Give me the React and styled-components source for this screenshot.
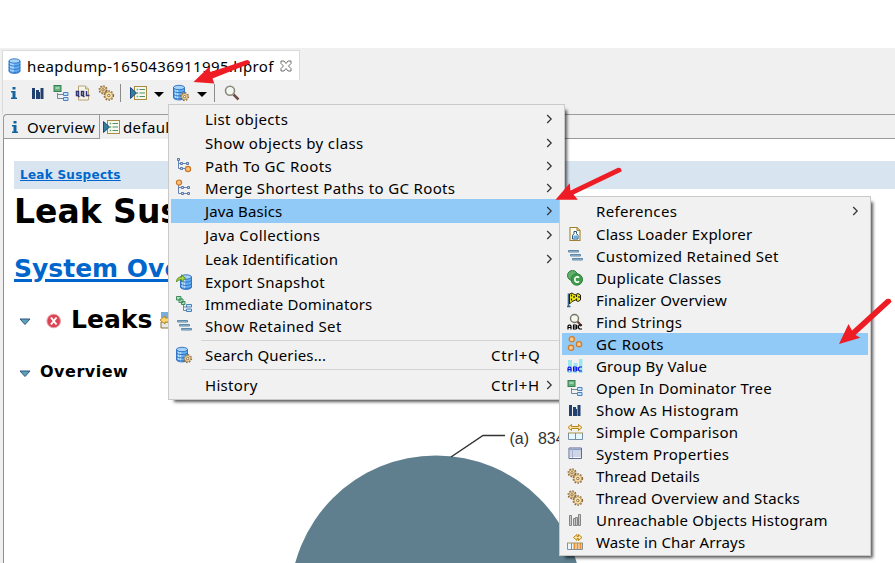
import React from "react";
import styled, { createGlobalStyle, css } from "styled-components";

const Global = createGlobalStyle`
  * { box-sizing: border-box; }
  html, body { margin: 0; padding: 0; background: #fff; overflow: hidden; }
`;

const uiFont = css`
  font-family: "Noto Sans", "Open Sans", sans-serif;
  font-size: 15px;
  color: #000;
  white-space: pre;
`;

/* ---------- page parts ---------- */

const Page = styled.div`
  ${uiFont}
  position: relative;
  width: 895px;
  height: 563px;
  padding-top: 48px;
  background: #fff;
  overflow: hidden;
`;
const Workbench = styled.div`
  height: 515px;
  padding: 2px 0 0 2px;
  background: #f0f0f0;
  display: flex;
  flex-direction: column;
`;
const EditorTab = styled.div`
  display: flex;
  align-items: center;
  width: 298px;
  height: 30px;
  padding: 1px 0 0 5px;
  background: #fff;
  border: solid #dadada;
  border-width: 1px 1px 0 1px;
`;
const FileName = styled.span`
  margin: 0 7px 0 5px;
  width: 246px;
  line-height: 22px;
  letter-spacing: 0.38px;
`;
const Toolbar = styled.div`
  display: flex;
  align-items: center;
  height: 34px;
  padding: 0 0 8px 3px;
  border-left: 1px solid #dadada;
`;
const Tool = styled.span`
  display: flex;
  margin-right: ${(p) => p.$gap}px;
`;
const ToolDivider = styled.span`
  width: 1px;
  height: 18px;
  margin-right: ${(p) => p.$gap}px;
  background: #8c8c8c;
`;
const Caret = styled.span`
  width: 0;
  height: 0;
  margin: 2px ${(p) => p.$gap}px 0 0;
  border: solid transparent;
  border-width: 5px 5px 0;
  border-top-color: #000;
`;
const PageTabs = styled.div`
  display: flex;
  flex: none;
  height: 25px;
  margin-left: 1px;
  border: solid #9a9a9a;
  border-width: 1px 0 0 1px;
  border-top-left-radius: 4px;
`;
const PageTab = styled.div`
  display: flex;
  align-items: center;
  width: ${(p) => p.$w}px;
  padding-left: ${(p) => p.$pl}px;
  gap: ${(p) => p.$gap}px;
  letter-spacing: 0.35px;
  border-right: 1px solid #9a9a9a;
  border-bottom: ${(p) => (p.$active ? "0" : "1px solid #9a9a9a")};
`;
const TabsRest = styled.div`
  flex: 1;
  border-bottom: 1px solid #9a9a9a;
`;
const Report = styled.div`
  flex: 1;
  display: flex;
  flex-direction: column;
  margin-left: 1px;
  padding-top: 22px;
  background: #fff;
  border-left: 1px solid #8f8f8f;
  font-family: "DejaVu Sans", Verdana, sans-serif;
  font-weight: bold;
`;
const Breadcrumb = styled.div`
  flex: none;
  height: 28px;
  margin-left: 10px;
  padding-left: 6px;
  background: #d8e5f0;
  color: #0066cc;
  font-size: 12px;
  line-height: 29px;
  text-decoration: underline;
  letter-spacing: 0.28px;
`;
const Title = styled.div`
  margin: 3px 0 0 10px;
  font-size: 33px;
  line-height: 40px;
`;
const SystemLink = styled.div`
  margin: 22px 0 0 10px;
  color: #0066cc;
  font-size: 25px;
  line-height: 30px;
  text-decoration: underline;
  text-decoration-thickness: 3px;
  text-underline-offset: 2px;
`;
const Section = styled.div`
  display: flex;
  align-items: center;
  margin: ${(p) => p.$top}px 0 0 15px;
  font-size: ${(p) => p.$size}px;
  line-height: ${(p) => p.$lh}px;
  letter-spacing: ${(p) => p.$ls || "0"};
`;
const Twistie = styled.span`
  display: flex;
  margin: 3px ${(p) => p.$gap}px 0 0;
`;
const SectionIcon = styled.span`
  display: flex;
  margin: 1px ${(p) => p.$gap}px 0 0;
`;
const Chart = styled.svg`
  flex: none;
  display: block;
  font-family: "Liberation Sans", Arial, sans-serif;
  font-size: 16px;
  font-weight: normal;
`;

/* ---------- menus ---------- */

const Menu = styled.div`
  position: absolute;
  left: ${(p) => p.$x}px;
  top: ${(p) => p.$y}px;
  width: ${(p) => p.$w}px;
  padding: 2px;
  background: #f1f1f1;
  border: 1px solid #c9c9c9;
  box-shadow: 4px 4px 3px -2px rgba(0, 0, 0, 0.65);
`;
const MenuRow = styled.div`
  display: flex;
  align-items: center;
  height: ${(p) => (p.$tall ? 24 : 22)}px;
  background: ${(p) => (p.$hot ? "#91c9f7" : "transparent")};
`;
const IconCell = styled.span`
  display: flex;
  flex: none;
  width: 34px;
  padding-left: 5px;
`;
const Label = styled.span`
  flex: 1;
  line-height: 22px;
  letter-spacing: ${(p) => p.$ls}px;
`;
const Shortcut = styled.span`
  width: 50px;
  margin-right: 5px;
  line-height: 22px;
  letter-spacing: 0.7px;
`;
const ChevronCell = styled.span`
  display: flex;
  width: 16px;
  padding-bottom: 1px;
`;
const Divider = styled.div`
  height: 1px;
  margin: 3px 0 3px 30px;
  background: #d3d3d3;
`;
const Arrows = styled.svg`
  position: absolute;
  left: 0;
  top: 0;
  pointer-events: none;
`;

/* ---------- icons ---------- */

const Svg = styled.svg`
  display: block;
  flex: none;
  overflow: visible;
`;
const Ico = ({ children, w = 16, h = 16 }) => (
  <Svg width={w} height={h} viewBox={`0 0 ${w} ${h}`}>{children}</Svg>
);

const Cylinder = ({ x = 0, y = 0 }) => (
  <g transform={`translate(${x} ${y})`} stroke="#2a6cc0" strokeWidth="0.900">
    <path d="M1 3v10c0 3.200 11 3.200 11 0V3z" fill="#62aef2" />
    <path d="M3 5v9M5 5v10" stroke="#b9e0ff" strokeWidth="1.500" />
    <path d="M1 6c0 2.800 11 2.800 11 0M1 9.300c0 2.800 11 2.800 11 0M1 12.300c0 2.800 11 2.800 11 0" fill="none" />
    <ellipse cx="6.500" cy="3" rx="5.500" ry="2.200" fill="#a5d4f8" />
  </g>
);
const Cog = ({ cx, cy, r = 3 }) => (
  <g>
    <circle cx={cx} cy={cy} r={r + 0.8} fill="none" stroke="#8d6a3c" strokeWidth="1.500" strokeDasharray="1.500 1.450" />
    <circle cx={cx} cy={cy} r={r} fill="#f8e2a8" stroke="#a8834b" strokeWidth="0.800" />
    <circle cx={cx} cy={cy} r="1.200" fill="#fffdf2" stroke="#805c2d" strokeWidth="0.900" />
  </g>
);
const Database = () => <Ico w={14}><Cylinder /></Ico>;
const DatabaseCog = () => <Ico><Cylinder x={-0.5} y={-0.5} /><Cog cx={11.6} cy={11.6} /></Ico>;
const ExportDb = () => (
  <Ico>
    <Cylinder x={3.5} y={0} />
    <path d="M.5 8C.5 4 3 3 5.500 3V.800L9.500 4.300 5.500 7.800V5.800C3.500 5.800 2 6 .5 8z" fill="#a9cf45" stroke="#4e861f" strokeWidth="0.900" />
  </Ico>
);
const Info = () => (
  <Ico>
    <path d="M6.500 2h3v2.500h-3zM5 6h4.500v6.500H11V14H5v-1.500h1.500v-5H5z" fill="#14649f" />
  </Ico>
);
const Bars = ({ hollow }) => (
  <Ico>
    {hollow ? (
      <g fill="#c9c9c9" stroke="#858585"><path d="M2.500 3.500h2v10h-2zM6.500 6.500h2v7h-2zM8.500 5.500h2v8h-2zM11.500 2.500h2v11h-2z" /></g>
    ) : (
      <path d="M2 3h3v11H2zM6 5h3v9H6zM9 7h1v7H9zM10.500 3H13.500v11h-3z" fill="#22406f" />
    )}
  </Ico>
);
const Tree = () => (
  <Ico>
    <path d="M4.500 8v5.500H10M4.500 9.500H10" fill="none" stroke="#71879b" />
    <rect x="1" y="0.500" width="7" height="6" fill="#64b27c" stroke="#388052" />
    <rect x="2.500" y="2" width="4" height="2" fill="#9ed3ad" />
    <path d="M10.500 7.500h4.500v3h-4.500zM10.500 12.500h4.500v3h-4.500z" fill="#c4e5ff" stroke="#4c82b9" />
  </Ico>
);
const Oql = () => (
  <Ico>
    <path d="M3.500 1h7l3 3v11h-10z" fill="#f7f4ea" stroke="#b6a477" />
    <path d="M10.500 1v3h3" fill="#e8d9ac" stroke="#b6a477" />
    <path d="M1.500 6.500h2v4h-2zM6.500 6.500h2v4h-2zM3 11l1.500 1M8 11l1.500 1M11.500 6v4.500H14.500" fill="none" stroke="#343574" strokeWidth="1.500" />
  </Ico>
);
const Gears = () => (
  <Ico>
    <Cog cx={5} cy={4.8} r={3} />
    <Cog cx={10.8} cy={10.5} r={3.8} />
  </Ico>
);
const RunReport = () => (
  <Ico w={17}>
    <rect x="4.500" y="1.500" width="12" height="13" fill="#f8f8ef" stroke="#a88b43" />
    <path d="M9.500 4.500H15M9.500 8H15M9.500 11.500H15" stroke="#4b9365" strokeWidth="1.200" />
    <path d="M6.700 4.500h1.500M6.700 8h1.500M6.700 11.500h1.500" stroke="#64aa74" strokeWidth="1.500" />
    <path d="M.5 2.500 6.500 8 .5 13.500z" fill="#327e9b" stroke="#1c4b83" />
  </Ico>
);
const Lens = () => (
  <Ico>
    <path d="m9.500 9.500 5 5" stroke="#6f4d45" strokeWidth="2.500" />
    <circle cx="6" cy="5.800" r="4.500" fill="#f2f7f2" stroke="#8b887c" strokeWidth="1.600" />
  </Ico>
);
const CloseX = () => (
  <Ico w={12} h={12}>
    <path d="M1 1h3l2 2.500L8 1h3v2.500L8.500 6 11 8.500V11H8L6 8.500 4 11H1V8.500L3.500 6 1 3.500z" fill="#fff" stroke="#6f6f6f" />
  </Ico>
);
const PathTree = ({ top }) => (
  <Ico>
    <path d={top ? "M2.500 5v8.500H13M2.500 7.500H13" : "M2.500 2v8.500H10M2.500 5.500H12"} fill="none" stroke="#6684b3" />
    {top ? (
      <g fill="#c6d7ee" stroke="#5878ac"><path d="M5.500 6.500h2v2h-2zM11.500 6.500h2v2h-2zM5.500 12.500h2v2h-2zM11.500 12.500h2v2h-2z" /></g>
    ) : (
      <g fill="#c6d7ee" stroke="#5878ac"><path d="M1.500.5h2v2h-2zM4.500 4.500h2v2h-2zM10.500 4.500h2v2h-2zM4.500 9.500h2v2h-2z" /></g>
    )}
    <circle cx={top ? 3 : 12} cy={top ? 2.6 : 11} r="2.600" fill="#ffc37d" stroke="#c97523" strokeWidth="1.200" />
  </Ico>
);
const Dominators = () => (
  <Ico>
    <g fill="#b4dabf" stroke="#3f8c5c"><path d="M.5.5h4.500v3.500H.5zM3 3h4v3.500H3zM5.500 5.500H9v3H5.500z" /></g>
    <path d="M7.500 9v5.500H11M7.500 11H11" fill="none" stroke="#71879b" />
    <path d="M10.500 8.500H15.500v2.500h-5zM10.500 13H15.500V15.500h-5z" fill="#c4e5ff" stroke="#4c82b9" />
  </Ico>
);
const Retained = () => (
  <Ico>
    <g fill="#a5cbe2" stroke="#6088a9"><path d="M1.500 2.500h10V4h-10zM3.500 6.500h10V8h-10zM5.500 10.500h10V12h-10z" /></g>
  </Ico>
);
const ClassLoader = () => (
  <Ico>
    <path d="M3 1.500h7l3 3v10H3z" fill="#fffced" stroke="#a18035" strokeWidth="1.100" />
    <path d="M10 1.500v3h3" fill="#e5c978" stroke="#a18035" />
    <path d="M7 5.500h2.500v2l1.500 2v3.500H5.500v-3.500l1.500-2z" fill="#fff" stroke="#225179" />
    <path d="M6.500 9.500H10V12.500H6.500z" fill="#6aace0" />
  </Ico>
);
const Duplicate = () => (
  <Ico>
    <circle cx="5.500" cy="5.500" r="5" fill="#60b069" stroke="#2d7e3b" />
    <circle cx="9.800" cy="9.500" r="5.700" fill="#3d9d48" stroke="#2d7e3b" />
    <path d="M12 7.800c-1.500-1.800-4.200-.8-4.200 1.700s2.700 3.500 4.200 1.700" fill="none" stroke="#fff" strokeWidth="1.700" />
  </Ico>
);
const FlagIcon = () => (
  <Ico>
    <path d="M1.500 1.500v13M0 14.500h3.500" stroke="#33628c" strokeWidth="1.600" />
    <path d="M2.500 2 5 1l3 2 3-1.500L13.500 3v5l-2.500 1.500L8.500 8 5 9.500 2.500 12z" fill="#f0e719" stroke="#20200c" />
    <path d="M4.500 2.500v2M7 4v2M9.500 3v2M12 4v2M4.500 6.500v2M9.500 6.500v1.500" stroke="#222208" strokeWidth="1.200" />
  </Ico>
);
const AbcMark = ({ c, y = 0 }) => (
  <path transform={`translate(0 ${y})`} d="M1 5V1.500L2 .5h1l1 1V5M1 3h3M6.500.5V4.500H9l1-1-1-1 1-1-1-1zM6.500 2.500H9M15 .5h-2.500l-1 1v2l1 1H15" fill="none" stroke={c} strokeWidth="1.200" />
);
const FindStrings = () => (
  <Ico>
    <path d="m10.500 7.500 4 4.500" stroke="#69433e" strokeWidth="2.300" />
    <circle cx="7.500" cy="4.500" r="4" fill="#f6f8ef" stroke="#777567" strokeWidth="1.400" />
    <AbcMark c="#000" y={10.5} />
  </Ico>
);
const GroupValue = () => (
  <Ico>
    <path d="M1 2h4v13H1zM6.500 5h4v10h-4zM12 1h3.500v14H12z" fill="#9de7ec" />
    <AbcMark c="#1010ec" y={8.5} />
  </Ico>
);
const RootsIcon = () => (
  <Ico>
    <g fill="#ffc98d" stroke="#d07b29" strokeWidth="1.300"><circle cx="4.800" cy="3.300" r="2.600" /><circle cx="12" cy="8.200" r="2.600" /><circle cx="4" cy="11.800" r="2.600" /></g>
  </Ico>
);
const DoubleArrow = ({ x = 0, w = 14 }) => (
  <path transform={`translate(${x} 0)`} d={`M.5 3.500 4 .5V2.500H${w - 3}V.5L${w + 0.5} 3.500 ${w - 3} 6.500V4.500H4V6.500z`} fill="#ffe5a0" stroke="#b9861d" />
);
const Compare = () => (
  <Ico><DoubleArrow x={0.5} /><path d="M1.500 9v6.500h14V9M8.500 9v6" fill="#e6f9ff" stroke="#7790a5" /><path d="M1 9h15" stroke="#ad924b" /></Ico>
);
const Props = () => (
  <Ico>
    <path d="M2 2h12.500v10.500H2z" fill="#f5f9ff" stroke="#5e6b92" />
    <path d="M2.500 3.500h11.500" stroke="#8c9dc4" strokeWidth="1.800" />
    <path d="M2.500 6h11.500M2.500 8h11.500M2.500 10h11.500M5.500 3v9" stroke="#a6b2ce" />
  </Ico>
);
const Waste = () => (
  <Ico>
    <DoubleArrow x={6} w={8.5} />
    <path d="M.5 9v6.500h15V9M4.500 9v6" fill="#eaf7fd" stroke="#8293a0" />
    <path d="M7.500 9v6M10.500 9v6M13.500 9v6" stroke="#ef902e" strokeWidth="2" />
    <path d="M0 9h16" stroke="#a99358" />
  </Ico>
);
const Chevron = () => (
  <Svg width="7" height="10" viewBox="0 0 7 10"><path d="m1.200 1 4 4-4 4" fill="none" stroke="#333" strokeWidth="1.200" /></Svg>
);
const Triangle = () => (
  <Svg width="13" height="8" viewBox="0 0 13 8"><path d="M1 1h10L6 6.500z" fill="#58a6b3" stroke="#335286" /></Svg>
);
const ErrorIcon = () => (
  <Ico>
    <circle cx="7.700" cy="8" r="6.800" fill="#dc4453" stroke="#eba0a6" />
    <path d="m5 4.500 5.500 7M10.500 4.500l-5.500 7" stroke="#fff" strokeWidth="2" />
  </Ico>
);
const LeakDetails = () => (
  <Svg width="24" height="18" viewBox="-8 0 24 18">
    <path d="M1 0h14v6H1z" fill="#79aedb" />
    <path d="M1 10h14v6H1z" fill="#e7e9e9" stroke="#8b752f" />
    <path d="m0 8 5-4v2h8v4H5v2z" fill="#ffd66c" stroke="#b7892e" />
  </Svg>
);

/* ---------- data ---------- */

const mainMenu = [
  { t: "List objects", ls: 0.38, sub: true },
  { t: "Show objects by class", ls: 0.38, sub: true },
  { t: "Path To GC Roots", ls: 0.4, icon: <PathTree />, sub: true },
  { t: "Merge Shortest Paths to GC Roots", ls: 0.36, icon: <PathTree top />, sub: true },
  { t: "Java Basics", ls: 0.12, sub: true, hot: true },
  { t: "Java Collections", ls: 0.38, sub: true },
  { t: "Leak Identification", ls: 0.15, sub: true },
  { t: "Export Snapshot", ls: 0.25, icon: <ExportDb /> },
  { t: "Immediate Dominators", ls: 0.15, icon: <Dominators /> },
  { t: "Show Retained Set", ls: 0.37, icon: <Retained /> },
  null,
  { t: "Search Queries...", ls: 0.15, icon: <DatabaseCog />, key: "Ctrl+Q" },
  null,
  { t: "History", ls: 0.3, key: "Ctrl+H", sub: true },
];
const basicsMenu = [
  { t: "References", ls: 0.33, sub: true },
  { t: "Class Loader Explorer", ls: 0.2, icon: <ClassLoader /> },
  { t: "Customized Retained Set", ls: 0.32, icon: <Retained /> },
  { t: "Duplicate Classes", ls: 0.17, icon: <Duplicate /> },
  { t: "Finalizer Overview", ls: 0.15, icon: <FlagIcon /> },
  { t: "Find Strings", ls: 0.23, icon: <FindStrings /> },
  { t: "GC Roots", ls: 0.45, icon: <RootsIcon />, hot: true },
  { t: "Group By Value", ls: 0.2, icon: <GroupValue /> },
  { t: "Open In Dominator Tree", ls: 0.2, icon: <Tree /> },
  { t: "Show As Histogram", ls: 0.36, icon: <Bars /> },
  { t: "Simple Comparison", ls: 0.29, icon: <Compare /> },
  { t: "System Properties", ls: 0.32, icon: <Props /> },
  { t: "Thread Details", ls: 0.15, icon: <Gears /> },
  { t: "Thread Overview and Stacks", ls: 0.22, icon: <Gears /> },
  { t: "Unreachable Objects Histogram", ls: 0.25, icon: <Bars hollow /> },
  { t: "Waste in Char Arrays", ls: 0.15, icon: <Waste /> },
];

const PopupMenu = ({ items, x, y, w }) => (
  <Menu $x={x} $y={y} $w={w}>
    {items.map((it, i) =>
      it ? (
        <MenuRow key={i} $tall={it.sub && !it.icon} $hot={it.hot}>
          <IconCell>{it.icon}</IconCell>
          <Label $ls={it.ls}>{it.t}</Label>
          {it.key && <Shortcut>{it.key}</Shortcut>}
          <ChevronCell>{it.sub && <Chevron />}</ChevronCell>
        </MenuRow>
      ) : (
        <Divider key={i} />
      )
    )}
  </Menu>
);

export default function App() {
  return (
    <Page>
      <Global />
      <Workbench>
        <EditorTab>
          <Database />
          <FileName>heapdump-1650436911995.hprof</FileName>
          <CloseX />
        </EditorTab>
        <Toolbar>
          <Tool $gap={8}><Info /></Tool>
          <Tool $gap={7}><Bars /></Tool>
          <Tool $gap={6}><Tree /></Tool>
          <Tool $gap={7}><Oql /></Tool>
          <Tool $gap={6}><Gears /></Tool>
          <ToolDivider $gap={9} />
          <Tool $gap={7}><RunReport /></Tool>
          <Caret $gap={9} />
          <Tool $gap={8}><DatabaseCog /></Tool>
          <Caret $gap={7} />
          <ToolDivider $gap={9} />
          <Tool $gap={0}><Lens /></Tool>
        </Toolbar>
        <PageTabs>
          <PageTab $w={96} $pl={3} $gap={4}><Info />Overview</PageTab>
          <PageTab $w={240} $pl={3} $gap={3} $active><RunReport />default_report</PageTab>
          <TabsRest />
        </PageTabs>
        <Report>
          <Breadcrumb>Leak Suspects</Breadcrumb>
          <Title>Leak Suspects</Title>
          <SystemLink>System Overview</SystemLink>
          <Section $top={21} $size={25} $lh={30}>
            <Twistie $gap={14}><Triangle /></Twistie>
            <SectionIcon $gap={9}><ErrorIcon /></SectionIcon>
            Leaks
            <SectionIcon $gap={0}><LeakDetails /></SectionIcon>
          </Section>
          <Section $top={27} $size={16} $lh={20} $ls="0.5px">
            <Twistie $gap={8}><Triangle /></Twistie>
            Overview
          </Section>
          <Chart width="891" height="181" viewBox="4 382 891 181">
            <circle cx="436" cy="601.500" r="146" fill="#5f7f8e" />
            <path d="M451 457 483 435.500H505" fill="none" stroke="#333" strokeWidth="1.500" />
            <text x="509.500" y="443.500" fill="#333" xmlSpace="preserve">(a)  834.1 MB</text>
          </Chart>
        </Report>
      </Workbench>
      <PopupMenu items={mainMenu} x={168} y={104} w={397} />
      <PopupMenu items={basicsMenu} x={559} y={196} w={312} />
      <Arrows width="895" height="563" viewBox="0 0 895 563" fill="#ee1c24">
        <path d="M193.500 82 208.700 67.300 210.500 72 247 60Q250.500 60.500 250 63.500L212.500 78.500 214.300 83.500z" />
        <path d="M555.500 199.800 569.700 183.300 570.500 190.500 618 167.700Q622 167.500 621.500 171.500L573.500 194.500 577.800 199.700z" />
        <path d="M839 344 848.500 324 852 330.500 886.500 299Q891 297.500 891.500 302L855.500 335 860.300 337.700z" />
      </Arrows>
    </Page>
  );
}
